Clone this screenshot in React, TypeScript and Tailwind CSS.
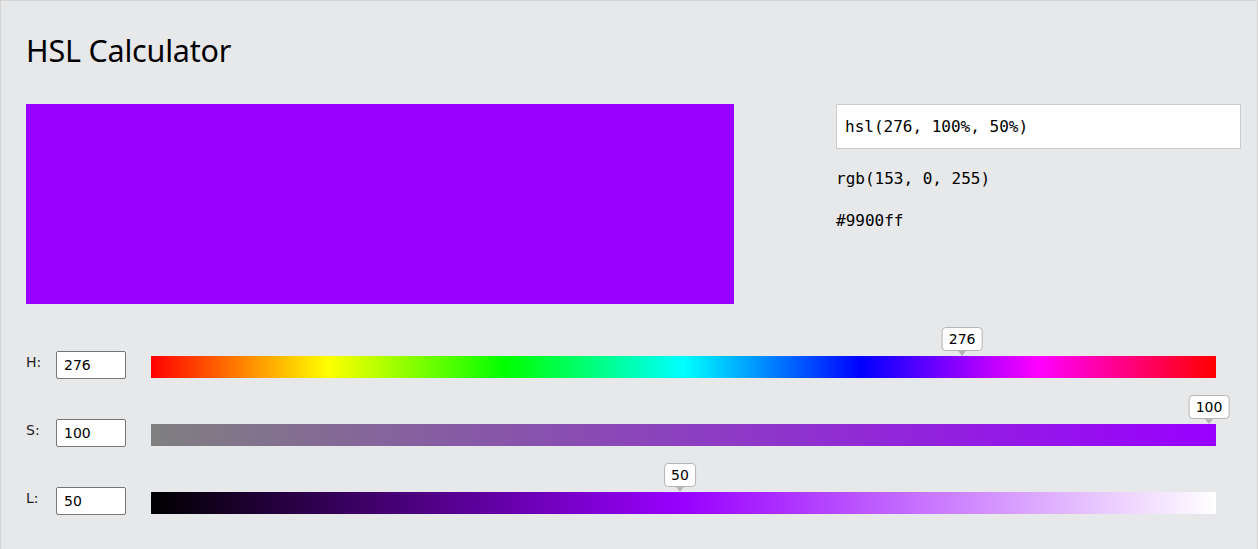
import { useState } from "react";

function hslToRgb(h: number, s: number, l: number) {
  const sat = s / 100;
  const lig = l / 100;
  const k = (n: number) => (n + h / 30) % 12;
  const a = sat * Math.min(lig, 1 - lig);
  const f = (n: number) => lig - a * Math.max(-1, Math.min(k(n) - 3, Math.min(9 - k(n), 1)));
  return [Math.round(f(0) * 255), Math.round(f(8) * 255), Math.round(f(4) * 255)];
}

const toHex = (rgb: number[]) => "#" + rgb.map((v) => v.toString(16).padStart(2, "0")).join("");

function SliderRow({
  label,
  value,
  max,
  gradient,
}: {
  label: string;
  value: number;
  max: number;
  gradient: string;
}) {
  return (
    <div className="flex items-center h-[28px]">
      <span className="w-[30px] text-[14px] text-[#222] -mt-[5px]">{label}</span>
      <input
        readOnly
        value={value}
        className="w-[70px] h-[28px] bg-white border border-[#767676] rounded-[2px] px-[7px] text-[14px] text-black outline-none"
      />
      <div className="relative ml-[25px] w-[1065px] h-[22px] mt-[4px]" style={{ background: gradient }}>
        <div
          className="absolute bottom-[27px] -translate-x-1/2 flex flex-col items-center"
          style={{ left: `${(value / max) * 1058}px` }}
        >
          <div className="bg-white border border-[#b5b5b5] rounded-[4px] h-[24px] px-[6px] flex items-center text-[14px] text-black leading-none">
            {value}
          </div>
        </div>
        <div
          className="absolute -top-[5px] -translate-x-1/2 w-0 h-0 border-l-[4px] border-r-[4px] border-t-[5px] border-l-transparent border-r-transparent border-t-[#b5b5b5]"
          style={{ left: `${(value / max) * 1058}px` }}
        />
      </div>
    </div>
  );
}

export default function App() {
  const [h] = useState(276);
  const [s] = useState(100);
  const [l] = useState(50);

  const rgb = hslToRgb(h, s, l);
  const hex = toHex(rgb);

  const hueGrad = `linear-gradient(to right, ${[0, 60, 120, 180, 240, 300, 360]
    .map((d) => `hsl(${d}, ${s}%, ${l}%)`)
    .join(", ")})`;
  const satGrad = `linear-gradient(to right, hsl(${h}, 0%, ${l}%), hsl(${h}, 100%, ${l}%))`;
  const ligGrad = `linear-gradient(to right, ${Array.from({ length: 21 }, (_, i) => `hsl(${h}, ${s}%, ${i * 5}%)`).join(", ")})`;

  return (
    <div className="min-h-[600px] bg-[#e7e8ea] border border-[#d4d4d4] pl-[25px] font-['DejaVu_Sans',sans-serif]">
      <h1 className="pt-[29px] h-[103px] text-[30.5px] leading-[40px] text-black font-['Noto_Sans',sans-serif] tracking-[-0.2px]">
        HSL Calculator
      </h1>

      <div className="flex">
        <div className="w-[708px] h-[200px]" style={{ background: hex }} />
        <div className="ml-[102px] w-[405px] font-['DejaVu_Sans_Mono',monospace] text-[16px] text-black">
          <div className="h-[45px] bg-white border border-[#cccccc] px-[8px] flex items-center">
            hsl({h}, {s}%, {l}%)
          </div>
          <div className="mt-[20px] leading-[20px]">rgb({rgb.join(", ")})</div>
          <div className="mt-[22px] leading-[20px]">{hex}</div>
        </div>
      </div>

      <div className="mt-[47px] flex flex-col gap-[40px]">
        <SliderRow label="H:" value={h} max={360} gradient={hueGrad} />
        <SliderRow label="S:" value={s} max={100} gradient={satGrad} />
        <SliderRow label="L:" value={l} max={100} gradient={ligGrad} />
      </div>
    </div>
  );
}
